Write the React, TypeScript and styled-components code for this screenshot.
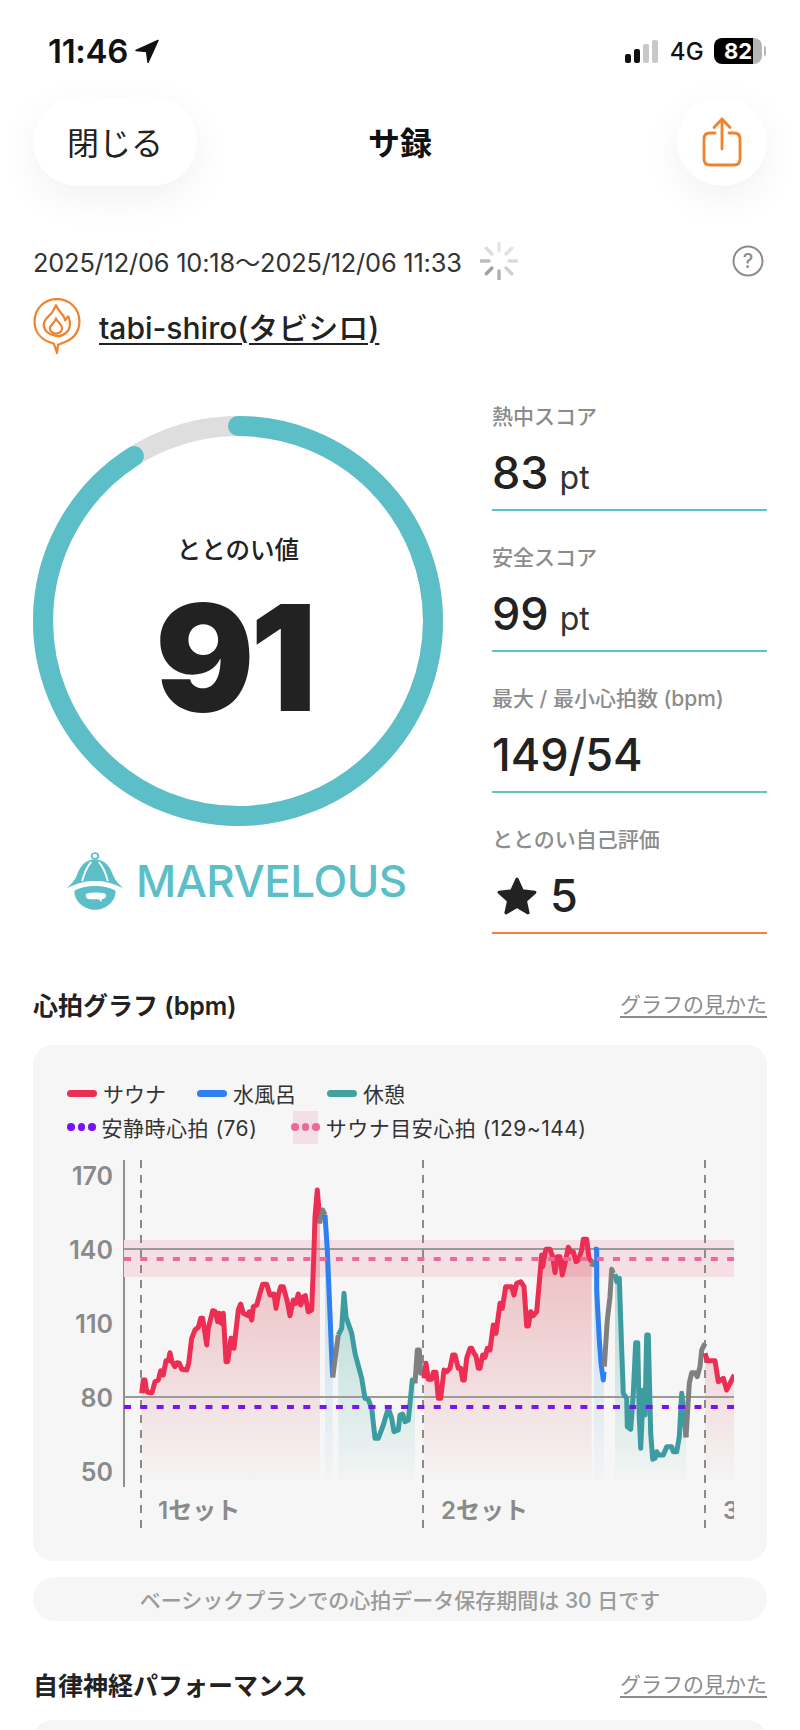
import React from "react";
import styled, { createGlobalStyle } from "styled-components";

const GlobalStyle = createGlobalStyle`
    html, body {
        margin: 0;
        padding: 0;
        background: #fff;
    }
    * {
        box-sizing: border-box;
    }
`;

const FONT = `Inter, "Noto Sans CJK JP", sans-serif`;
const ORANGE = "#F0832E";
const TEAL = "#5CBFC8";

const Page = styled.div`
    width: 800px;
    height: 1730px;
    overflow: hidden;
    font-family: ${FONT};
    color: #222;
    background: #fff;
`;

const StatusBar = styled.div`
    height: 97px;
    padding: 33px 38px 0 48px;
    display: flex;
    justify-content: space-between;
    align-items: flex-start;
`;
const TimeBox = styled.div`
    display: flex;
    align-items: center;
    gap: 7px;
    font-size: 33px;
    font-weight: 600;
    line-height: 36px;
    letter-spacing: -0.3px;
    color: #111;
`;
const StatusRight = styled.div`
    display: flex;
    align-items: center;
    gap: 10px;
    height: 36px;
`;
const SignalBars = styled.div`
    display: flex;
    align-items: flex-end;
    gap: 3px;
    height: 23px;
    margin-right: 2px;
`;
const Bar = styled.span<{ $h: number; $on: boolean }>`
    width: 6px;
    height: ${(p) => p.$h}px;
    border-radius: 2px;
    background: ${(p) => (p.$on ? "#111" : "#c8c8c8")};
`;
const NetText = styled.span`
    font-size: 24px;
    font-weight: 500;
    letter-spacing: 0.3px;
    color: #111;
`;
const Battery = styled.div`
    width: 48px;
    height: 26px;
    border-radius: 8px;
    background: linear-gradient(90deg, #000 82%, #b5b5b5 82%);
    color: #fff;
    font-size: 22px;
    font-weight: 700;
    line-height: 26px;
    text-align: center;
    position: relative;
    &::after {
        content: "";
        position: absolute;
        right: -4px;
        top: 8px;
        width: 2px;
        height: 10px;
        border-radius: 0 2px 2px 0;
        background: #b5b5b5;
    }
`;

const Header = styled.div`
    height: 89px;
    padding: 0 33px;
    display: grid;
    grid-template-columns: 1fr auto 1fr;
    align-items: center;
`;
const CloseButton = styled.div`
    justify-self: start;
    width: 164px;
    height: 89px;
    padding-bottom: 2px;
    border-radius: 45px;
    background: #fff;
    box-shadow: 0 12px 40px rgba(0, 0, 0, 0.06);
    font-size: 32px;
    color: #222;
    display: flex;
    align-items: center;
    justify-content: center;
`;
const Title = styled.div`
    padding-bottom: 2px;
    font-size: 32px;
    font-weight: 700;
    color: #111;
`;
const ShareButton = styled.div`
    justify-self: end;
    width: 90px;
    height: 89px;
    border-radius: 50%;
    background: #fff;
    box-shadow: 0 12px 40px rgba(0, 0, 0, 0.06);
    display: flex;
    align-items: center;
    justify-content: center;
`;

const InfoRow = styled.div`
    margin-top: 55px;
    height: 40px;
    padding: 0 36px 0 33px;
    display: flex;
    align-items: center;
`;
const DateText = styled.span`
    font-size: 25.4px;
    color: #333;
    letter-spacing: -0.2px;
`;
const SpinnerWrap = styled.span`
    margin-left: 18px;
    display: flex;
`;
const HelpIcon = styled.span`
    margin-left: auto;
    display: flex;
`;
const NameRow = styled.div`
    margin-top: 17px;
    height: 55px;
    padding: 0 33px 0 33px;
    display: flex;
    align-items: center;
    gap: 18px;
`;
const NameLink = styled.a`
    font-size: 30px;
    font-weight: 500;
    color: #222;
    text-decoration: underline;
    text-underline-offset: 4px;
    text-decoration-thickness: 2px;
`;

const MainRow = styled.div`
    margin-top: 17px;
    padding: 0 33px;
    display: flex;
    justify-content: space-between;
`;
const LeftCol = styled.div`
    width: 410px;
    padding-top: 46px;
    display: flex;
    flex-direction: column;
`;
const Gauge = styled.div`
    width: 410px;
    height: 410px;
    display: grid;
    > * {
        grid-area: 1 / 1;
    }
`;
const GaugeText = styled.div`
    padding-top: 117px;
    display: flex;
    flex-direction: column;
    align-items: center;
`;
const GaugeLabel = styled.div`
    font-size: 24.5px;
    line-height: 34px;
    font-weight: 500;
    color: #222;
`;
const GaugeValue = styled.div`
    margin-top: 16px;
    padding-right: 8px;
    font-size: 147px;
    line-height: 150px;
    font-weight: 900;
    letter-spacing: -4px;
    color: #222;
`;
const Grade = styled.div`
    margin-top: 26px;
    padding-left: 34px;
    height: 58px;
    display: flex;
    align-items: center;
    gap: 13px;
    color: ${TEAL};
    font-size: 44px;
    font-weight: 500;
    letter-spacing: -0.5px;
`;

const Scores = styled.div`
    width: 275px;
`;
const ScoreRow = styled.div<{ $orange?: boolean }>`
    height: 141px;
    padding-top: 32px;
    border-bottom: 2px solid ${(p) => (p.$orange ? "#F5823C" : "#58C4C8")};
`;
const ScoreLabel = styled.div`
    font-size: 21px;
    line-height: 30px;
    font-weight: 500;
    white-space: nowrap;
    color: #8c8c8c;
`;
const ScoreValue = styled.div`
    margin-top: 15px;
    display: flex;
    align-items: baseline;
    gap: 11px;
    font-size: 45px;
    line-height: 52px;
    font-weight: 500;
    color: #222;
`;
const Unit = styled.span`
    font-size: 32px;
    font-weight: 400;
    color: #333;
`;
const StarValue = styled(ScoreValue)`
    align-items: center;
    gap: 12px;
    padding-left: 4px;
`;

const SectionHead = styled.div<{ $top: number }>`
    margin-top: ${(p) => p.$top}px;
    height: 40px;
    padding: 0 33px;
    display: flex;
    align-items: center;
    justify-content: space-between;
`;
const SectionTitle = styled.div`
    font-size: 25px;
    font-weight: 600;
    color: #222;
`;
const SectionLink = styled.a`
    font-size: 21px;
    margin-top: -2px;
    color: #8c8c8c;
    text-decoration: underline;
    text-underline-offset: 4px;
`;

const Card = styled.div`
    margin: 21px 33px 0;
    height: 516px;
    border-radius: 20px;
    background: #f6f6f6;
    padding-top: 31px;
`;
const LegendRow = styled.div<{ $gap: number; $track?: number }>`
    height: 34px;
    padding-left: 34px;
    display: flex;
    align-items: center;
    gap: ${(p) => p.$gap}px;
    letter-spacing: ${(p) => p.$track ?? 0}px;
`;
const LegendItem = styled.div`
    display: flex;
    align-items: center;
    gap: 6px;
    font-size: 21px;
    color: #333;
`;
const LineSwatch = styled.span<{ $color: string }>`
    width: 30px;
    height: 7px;
    border-radius: 4px;
    background: ${(p) => p.$color};
`;
const DotSwatch = styled.span<{ $band?: boolean }>`
    height: 33px;
    display: flex;
    align-items: center;
    gap: 3px;
    background: ${(p) => (p.$band ? "linear-gradient(#f3dfe4, #f3dfe4) center / 25px 33px no-repeat" : "none")};
`;
const Dot = styled.i<{ $color: string }>`
    width: 7.5px;
    height: 7.5px;
    border-radius: 50%;
    background: ${(p) => p.$color};
`;
const ChartSvg = styled.svg`
    display: block;
    margin-top: 6px;
`;

const Notice = styled.div`
    margin: 16px 33px 0;
    height: 44px;
    border-radius: 22px;
    background: #f6f6f6;
    display: flex;
    align-items: center;
    justify-content: center;
    font-size: 21px;
    font-weight: 500;
    color: #9b9b9b;
`;
const NextCard = styled.div`
    margin: 16px 33px 0;
    height: 60px;
    border-radius: 20px 20px 0 0;
    background: #f6f6f6;
`;

// traced from the picture, numbers are crop units (3x, crop x=30 y=1150)
type Seg = { kind: "sauna" | "water" | "rest" | "gray"; pts: number[][] };
const S2 = 1110;
const shift = (pts: number[][]) => pts.map(([x, y]) => [x + S2, y]);

const SEGMENTS: Seg[] = [
    {
        kind: "sauna",
        pts: [[335,730],[340,690],[345,690],[350,725],[358,728],[366,728],[375,695],[385,690],[392,662],[400,675],[408,632],[415,632],[420,608],[426,635],[435,650],[440,638],[448,640],[455,658],[470,660],[476,640],[485,565],[495,540],[505,532],[512,505],[518,505],[530,585],[535,535],[548,482],[556,485],[563,515],[568,490],[574,520],[580,490],[588,635],[593,635],[603,565],[612,595],[625,480],[632,462],[640,490],[655,497],[658,485],[665,510],[670,470],[680,465],[690,430],[698,403],[710,403],[720,435],[732,432],[738,475],[745,435],[752,410],[760,410],[772,455],[780,497],[790,450],[797,460],[805,432],[812,465],[820,440],[826,437],[835,485],[845,480],[852,300],[855,200],[862,120],[870,220]],
    },
    { kind: "gray", pts: [[868,220],[878,180],[885,195]] },
    { kind: "water", pts: [[885,195],[892,300],[897,420],[905,620],[908,682]] },
    { kind: "gray", pts: [[908,682],[925,555]] },
    {
        kind: "rest",
        pts: [[925,555],[935,535],[942,430],[948,500],[965,550],[975,610],[995,685],[1005,745],[1015,748],[1025,775],[1035,865],[1045,865],[1060,825],[1075,775],[1085,805],[1092,845],[1105,840],[1110,795],[1118,792],[1125,815],[1135,810],[1140,760],[1147,690],[1155,700]],
    },
    { kind: "gray", pts: shift([[45,700],[52,600],[58,600],[62,670],[70,660]]) },
    {
        kind: "sauna",
        pts: shift([[72,685],[78,640],[85,688],[95,688],[100,667],[108,667],[115,745],[122,745],[132,660],[140,665],[150,655],[158,615],[165,615],[175,655],[182,655],[188,690],[193,690],[200,625],[210,595],[215,595],[222,610],[228,618],[235,655],[240,655],[248,615],[255,622],[262,595],[270,600],[280,525],[288,550],[300,460],[307,475],[317,410],[335,410],[342,435],[350,400],[362,395],[372,410],[380,528],[385,528],[392,485],[400,497],[410,485],[425,315],[428,350],[435,310],[438,298],[450,298],[458,320],[465,368],[472,320],[480,320],[487,375],[495,340],[505,292],[512,305],[520,305],[528,335],[535,330],[545,300],[550,268],[560,268],[567,325],[575,335]]),
    },
    { kind: "gray", pts: shift([[575,350],[582,330]]) },
    { kind: "water", pts: shift([[582,298],[590,298],[590,420],[598,570],[603,640],[610,690],[612,665]]) },
    { kind: "gray", pts: shift([[613,650],[622,510],[630,440],[635,358],[640,370]]) },
    {
        kind: "rest",
        pts: shift([[645,372],[650,395],[658,385],[665,600],[670,730],[680,745],[682,830],[692,838],[700,730],[707,578],[713,578],[718,800],[722,895],[730,720],[735,795],[740,555],[745,555],[752,850],[758,928],[765,925],[770,905],[775,915],[790,915],[800,890],[815,890],[820,905],[830,905],[838,860],[845,730],[850,770],[858,862]]),
    },
    { kind: "gray", pts: shift([[858,862],[868,700],[875,668],[885,668],[892,680],[900,650],[905,600],[915,580]]) },
    { kind: "sauna", pts: shift([[915,610],[922,632],[945,632],[955,695],[970,685],[980,720],[990,700],[1003,675]]) },
];

const LINE_COLOR = { sauna: "#EC2D54", water: "#2E7FF0", rest: "#3D9CA0", gray: "#808080" };
const AREA_ID = { sauna: "areaRed", water: "areaBlue", rest: "areaTeal" };

const px = (x: number) => x / 3 - 3;
const py = (y: number) => y / 3;
const toLine = (pts: number[][]) => pts.map(([x, y]) => `${px(x).toFixed(1)},${py(y).toFixed(1)}`).join(" ");
const BASE = 990;

const Y_TICKS = [
    { t: "170", y: 26 },
    { t: "140", y: 100 },
    { t: "110", y: 174 },
    { t: "80", y: 248 },
    { t: "50", y: 322 },
];
const SETS = [
    { t: "1セット", x: 125 },
    { t: "2セット", x: 408 },
    { t: "3", x: 690 },
];

const HeartChart = () => (
    <ChartSvg width={734} height={400} viewBox="0 0 734 400">
        <defs>
            <linearGradient id="areaRed" gradientUnits="userSpaceOnUse" x1="0" y1="90" x2="0" y2="330">
                <stop offset="0" stopColor="#d9555f" stopOpacity="0.36" />
                <stop offset="1" stopColor="#d9555f" stopOpacity="0.02" />
            </linearGradient>
            <linearGradient id="areaBlue" gradientUnits="userSpaceOnUse" x1="0" y1="90" x2="0" y2="330">
                <stop offset="0" stopColor="#4a9ad0" stopOpacity="0.32" />
                <stop offset="1" stopColor="#4a9ad0" stopOpacity="0.02" />
            </linearGradient>
            <linearGradient id="areaTeal" gradientUnits="userSpaceOnUse" x1="0" y1="130" x2="0" y2="330">
                <stop offset="0" stopColor="#3daa9c" stopOpacity="0.36" />
                <stop offset="1" stopColor="#3daa9c" stopOpacity="0.02" />
            </linearGradient>
            <clipPath id="plotClip">
                <rect x="0" y="0" width="701" height="400" />
            </clipPath>
        </defs>

        {Y_TICKS.map((k) => (
            <text key={k.t} x="80" y={k.y} dy="9" textAnchor="end" fontFamily={FONT} fontSize="25" fontWeight="600" fill="#8a8a8a">
                {k.t}
            </text>
        ))}
        <line x1="91" y1="10" x2="91" y2="337" stroke="#8f8f8f" strokeWidth="2" />

        <g clipPath="url(#plotClip)">
            <rect x="91" y="90" width="610" height="37" fill="#f3dfe4" />
            {SEGMENTS.filter((s) => s.kind !== "gray").map((s, i) => {
                const first = s.pts[0];
                const last = s.pts[s.pts.length - 1];
                const poly = `${px(first[0])},${py(BASE)} ${toLine(s.pts)} ${px(last[0])},${py(BASE)}`;
                return <polygon key={i} points={poly} fill={`url(#${AREA_ID[s.kind as "sauna" | "water" | "rest"]})`} />;
            })}
            {[108, 390, 672].map((x) => (
                <line key={x} x1={x} y1="10" x2={x} y2="380" stroke="#8a8a8a" strokeWidth="2" strokeDasharray="8 7" />
            ))}
            <line x1="91" y1="99" x2="701" y2="99" stroke="#9a9a9a" strokeWidth="2" />
            <line x1="91" y1="247" x2="701" y2="247" stroke="#9a9a9a" strokeWidth="2" />
            {SEGMENTS.map((s, i) => (
                <polyline key={i} points={toLine(s.pts)} fill="none" stroke={LINE_COLOR[s.kind]} strokeWidth="5" strokeLinejoin="round" />
            ))}
            <line x1="91" y1="109" x2="701" y2="109" stroke="#EE6A96" strokeWidth="4" strokeDasharray="7 9.3" />
            <line x1="91" y1="257" x2="701" y2="257" stroke="#7B12F5" strokeWidth="4" strokeDasharray="7 9.3" />
            {SETS.map((s) => (
                <text key={s.t} x={s.x} y="369" fontFamily={FONT} fontSize="24" fontWeight="600" fill="#8a8a8a">
                    {s.t}
                </text>
            ))}
        </g>
    </ChartSvg>
);

const Spinner = () => (
    <svg width="38" height="38" viewBox="-19 -19 38 38">
        {[0, 1, 2, 3, 4, 5, 6, 7].map((i) => (
            <line
                key={i}
                x1="0"
                y1="-10"
                x2="0"
                y2="-18"
                stroke={["#e4e4e4", "#e2e2e2", "#dcdcdc", "#cfcfcf", "#b0b0b0", "#a0a0a0", "#bcbcbc", "#dcdcdc"][i]}
                strokeWidth="3.4"
                strokeLinecap="round"
                transform={`rotate(${i * 45})`}
            />
        ))}
    </svg>
);

const RING_R = 195;
const RING_LEN = 2 * Math.PI * RING_R;

const Ring = () => (
    <svg width="410" height="410" viewBox="0 0 410 410">
        <circle cx="205" cy="205" r={RING_R} fill="none" stroke="#dedede" strokeWidth="20" />
        <circle
            cx="205"
            cy="205"
            r={RING_R}
            fill="none"
            stroke={TEAL}
            strokeWidth="20"
            strokeLinecap="round"
            strokeDasharray={`${RING_LEN * 0.91} ${RING_LEN}`}
            transform="rotate(-90 205 205)"
        />
    </svg>
);

const HatLogo = () => (
    <svg width="56" height="58" viewBox="84 62 152 176" preserveAspectRatio="none">
        <circle cx="160" cy="74" r="9" fill="none" stroke={TEAL} strokeWidth="5" />
        <path d="M160 85 C130 85 118 110 110 135 C104 150 95 160 84 172 C115 155 135 150 160 150 C185 150 205 155 236 172 C225 160 216 150 210 135 C202 110 190 85 160 85 Z" fill={TEAL} />
        <path d="M150 92 C135 110 130 130 125 150 M170 92 C185 110 190 130 195 150" fill="none" stroke="#fff" strokeWidth="5" />
        <path d="M104 180 C130 160 190 160 216 180 C216 212 190 237 160 237 C130 237 104 212 104 180 Z" fill={TEAL} />
        <path d="M135 192 C135 183 190 183 190 192 C190 200 188 205 178 205 L178 214 L170 205 L145 205 C138 205 135 200 135 192 Z" fill="#fff" />
    </svg>
);

const FlamePin = () => (
    <svg width="48" height="56" viewBox="0 0 46 55" fill="none" stroke={ORANGE} strokeWidth="2.2" strokeLinejoin="round" strokeLinecap="round">
        <path d="M16 43.5 C6 40 1 32 1 23 C1 10 11 1 23 1 C35 1 45 10 45 23 C45 32 40 40 29 44 L24 46 L23 54 L20 45 Z" />
        <path d="M22 7 C24 13 30 16 31 22 C32 20 33 19 34 18 C37 24 36 31 32 34 C29 37 25 38 21 37 C15 36 10 32 10 26 C10 20 17 17 19 13 C20 11 21 9 22 7 Z" />
        <path d="M22 20 C23 24 28 25 28 30 C28 33 25 35 22 35 C19 35 16 33 16 30 C16 26 21 25 22 20 Z" />
    </svg>
);

const scoreRows = [
    { label: "熱中スコア", value: "83", unit: "pt" },
    { label: "安全スコア", value: "99", unit: "pt" },
    { label: "最大 / 最小心拍数 (bpm)", value: "149/54" },
];

const App = () => {
    return (
        <Page>
            <GlobalStyle />
            <StatusBar>
                <TimeBox>
                    11:46
                    <svg width="24" height="24" viewBox="0 0 24 24">
                        <path d="M23 1.5 L1 11.5 L11.5 12.5 L13 23.5 Z" fill="#111" stroke="#111" strokeWidth="1.4" strokeLinejoin="round" />
                    </svg>
                </TimeBox>
                <StatusRight>
                    <SignalBars>
                        <Bar $h={9} $on />
                        <Bar $h={14} $on />
                        <Bar $h={19} $on={false} />
                        <Bar $h={23} $on={false} />
                    </SignalBars>
                    <NetText>4G</NetText>
                    <Battery>82</Battery>
                </StatusRight>
            </StatusBar>

            <Header>
                <CloseButton>閉じる</CloseButton>
                <Title>サ録</Title>
                <ShareButton>
                    <svg width="40" height="50" viewBox="0 0 40 50" fill="none" stroke={ORANGE} strokeWidth="2.8" strokeLinecap="round" strokeLinejoin="round">
                        <path d="M20 2 V32 M12 10.5 L20 2 L28 10.5" />
                        <path d="M13 16 H8 C4 16 2 18 2 22 V42 C2 46 4 48 8 48 H32 C36 48 38 46 38 42 V22 C38 18 36 16 32 16 H27" />
                    </svg>
                </ShareButton>
            </Header>

            <InfoRow>
                <DateText>2025/12/06 10:18～2025/12/06 11:33</DateText>
                <SpinnerWrap>
                    <Spinner />
                </SpinnerWrap>
                <HelpIcon>
                    <svg width="32" height="32" viewBox="0 0 32 32">
                        <circle cx="16" cy="16" r="14.5" fill="none" stroke="#8c8c8c" strokeWidth="2" />
                        <text x="16" y="23" textAnchor="middle" fontFamily={FONT} fontSize="20" fontWeight="500" fill="#8c8c8c">?</text>
                    </svg>
                </HelpIcon>
            </InfoRow>

            <NameRow>
                <FlamePin />
                <NameLink>tabi-shiro(タビシロ)</NameLink>
            </NameRow>

            <MainRow>
                <LeftCol>
                    <Gauge>
                        <Ring />
                        <GaugeText>
                            <GaugeLabel>ととのい値</GaugeLabel>
                            <GaugeValue>91</GaugeValue>
                        </GaugeText>
                    </Gauge>
                    <Grade>
                        <HatLogo />
                        MARVELOUS
                    </Grade>
                </LeftCol>
                <Scores>
                    {scoreRows.map((r) => (
                        <ScoreRow key={r.label}>
                            <ScoreLabel>{r.label}</ScoreLabel>
                            <ScoreValue>
                                {r.value}
                                {r.unit && <Unit>{r.unit}</Unit>}
                            </ScoreValue>
                        </ScoreRow>
                    ))}
                    <ScoreRow $orange>
                        <ScoreLabel>ととのい自己評価</ScoreLabel>
                        <StarValue>
                            <svg width="42" height="40" viewBox="0 0 40 38">
                                <path d="M20 3 L25 14 L37 15.5 L28 23.5 L30.5 35 L20 29 L9.5 35 L12 23.5 L3 15.5 L15 14 Z" fill="#222" stroke="#222" strokeWidth="3" strokeLinejoin="round" />
                            </svg>
                            5
                        </StarValue>
                    </ScoreRow>
                </Scores>
            </MainRow>

            <SectionHead $top={50}>
                <SectionTitle>心拍グラフ (bpm)</SectionTitle>
                <SectionLink>グラフの見かた</SectionLink>
            </SectionHead>

            <Card>
                <LegendRow $gap={31}>
                    <LegendItem>
                        <LineSwatch $color="#EC2D54" />
                        サウナ
                    </LegendItem>
                    <LegendItem>
                        <LineSwatch $color="#2E7FF0" />
                        水風呂
                    </LegendItem>
                    <LegendItem>
                        <LineSwatch $color="#45A0A0" />
                        休憩
                    </LegendItem>
                </LegendRow>
                <LegendRow $gap={34} $track={0.5}>
                    <LegendItem>
                        <DotSwatch>
                            <Dot $color="#7B12F5" />
                            <Dot $color="#7B12F5" />
                            <Dot $color="#7B12F5" />
                        </DotSwatch>
                        安静時心拍 (76)
                    </LegendItem>
                    <LegendItem>
                        <DotSwatch $band>
                            <Dot $color="#EE6A96" />
                            <Dot $color="#EE6A96" />
                            <Dot $color="#EE6A96" />
                        </DotSwatch>
                        サウナ目安心拍 (129~144)
                    </LegendItem>
                </LegendRow>
                <HeartChart />
            </Card>

            <Notice>ベーシックプランでの心拍データ保存期間は 30 日です</Notice>

            <SectionHead $top={43}>
                <SectionTitle>自律神経パフォーマンス</SectionTitle>
                <SectionLink>グラフの見かた</SectionLink>
            </SectionHead>
            <NextCard />
        </Page>
    );
};

export default App;
